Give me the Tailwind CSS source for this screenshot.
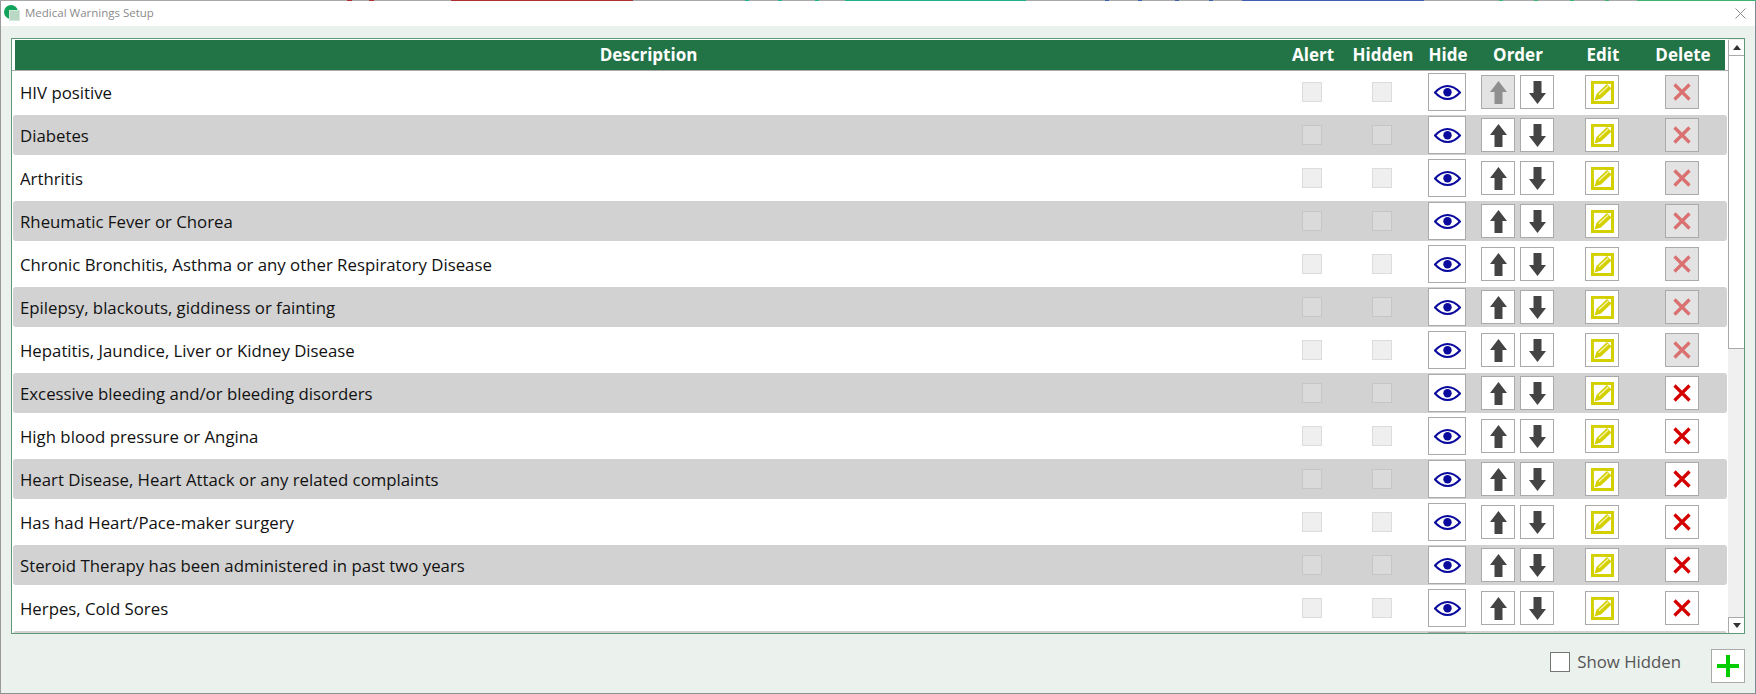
<!DOCTYPE html>
<html>
<head>
<meta charset="utf-8">
<script src="https://cdn.jsdelivr.net/npm/@tailwindcss/browser@4"></script>
<title>Medical Warnings Setup</title>
</head>
<body class="w-[1756px] h-[694px] overflow-hidden bg-white font-['Open_Sans','Noto_Sans',sans-serif]">
<svg width="0" height="0" class="absolute">
  <defs>
    <symbol id="eye" viewBox="0 0 27 15"><path d="M1 7.500C6 2 10 1 13.500 1S21 2 26 7.500C21 13 17 14 13.500 14S6 13 1 7.500Z" fill="none" stroke="#0a0a9e" stroke-width="2"/><circle cx="13.500" cy="7.300" r="4.200" fill="#0a0a9e"/></symbol>
    <symbol id="up" viewBox="0 0 17 23"><path d="M8.500 0 17 11H12.500V23H4.500V11H0Z" fill="currentColor"/></symbol>
    <symbol id="down" viewBox="0 0 17 23"><path d="M4.500 0H12.500V12H17L8.500 23 0 12H4.500Z" fill="currentColor"/></symbol>
    <symbol id="edit" viewBox="0 0 23 23"><path d="M1.500 1.500H21.500V21.500H1.500Z" fill="none" stroke="#d4d000" stroke-width="3"/><path d="M3.500 19.500 5.500 13 16 3 20.500 7.500 10 17.500Z" fill="#d4d000"/><path d="M7.800 13.800 17.300 5" stroke="#f6f5b0" stroke-width="1.300"/><path d="M14 3.200 3.200 3.200 3.200 11" stroke="#fff" stroke-width=".4" fill="none"/></symbol>
    <symbol id="x" viewBox="0 0 18 18"><path d="M1.500 1.500 16.500 16.500M16.500 1.500 1.500 16.500" stroke="#d40000" stroke-width="3.200" fill="none"/></symbol>
  </defs>
</svg>

<div class="relative flex flex-col w-[1756px] h-[694px] border-l border-l-[#9a9a9a] border-r border-r-[#7c8a94] border-b border-b-[#8a8f92]">
  <div class="absolute -left-px -right-px top-0 h-px flex bg-[#a9a9a9]">
    <div class="ml-[347px] w-[5px] bg-[#b03030]"></div><div class="ml-[17px] w-[5px] bg-[#b03030]"></div>
    <div class="ml-[77px] w-[182px] bg-[#b03030]"></div>
    <div class="ml-[112px] w-[4px] bg-[#1fb08e]"></div><div class="ml-[29px] w-[4px] bg-[#1fb08e]"></div><div class="ml-[33px] w-[4px] bg-[#1fb08e]"></div>
    <div class="ml-[26px] w-[181px] bg-[#1fb08e]"></div>
    <div class="ml-[79px] w-[4px] bg-[#3f5fb0]"></div><div class="ml-[29px] w-[4px] bg-[#3f5fb0]"></div><div class="ml-[33px] w-[4px] bg-[#3f5fb0]"></div><div class="ml-[30px] w-[4px] bg-[#3f5fb0]"></div>
    <div class="ml-[29px] w-[182px] bg-[#3f5fb0]"></div>
    <div class="ml-[75px] w-[4px] bg-[#3cb371]"></div><div class="ml-[31px] w-[4px] bg-[#3cb371]"></div><div class="ml-[32px] w-[4px] bg-[#3cb371]"></div><div class="ml-[31px] w-[4px] bg-[#3cb371]"></div>
    <div class="ml-[28px] w-[119px] bg-[#3cb371]"></div>
  </div>

  <header class="flex items-center h-[26px] bg-white pl-[3px] pr-[9px] shrink-0">
    <svg width="17" height="17" viewBox="0 0 17 17" class="shrink-0 mt-px"><circle cx="7" cy="7" r="7" fill="#12a35a"/><rect x="5.500" y="5.500" width="10" height="10" fill="#b9d9c4" stroke="#d4e6da"/></svg>
    <span class="ml-[4px] text-[11.5px] text-[#8b8b8b]">Medical Warnings Setup</span>
    <svg width="11" height="11" viewBox="0 0 11 11" class="ml-auto"><path d="M.5.5 10.500 10.500M10.500.5.500 10.500" stroke="#8a8a8a" fill="none"/></svg>
  </header>

  <main class="flex flex-col flex-1 bg-[#ebf1ed] pt-[12px] pl-[10px] pr-[10px] min-h-0">
    <section class="flex h-[596px] border border-[#5f9a78] bg-white overflow-hidden shrink-0">
      <div class="flex flex-col w-[1716px] pt-px overflow-hidden">
        <div class="flex items-center h-[30px] shrink-0 ml-[3px] mr-[3px] bg-[#227447] text-white font-bold text-[17px]">
          <div class="w-[1267px] text-center">Description</div>
          <div class="w-[62px] text-center">Alert</div>
          <div class="w-[78px] text-center">Hidden</div>
          <div class="w-[52px] text-center">Hide</div>
          <div class="w-[88px] text-center">Order</div>
          <div class="w-[82px] text-center">Edit</div>
          <div class="w-[78px] text-center">Delete</div>
        </div>
        <div class="h-px bg-[#aaaaaa] shrink-0"></div>
        <div class="flex flex-col pt-px text-[16.8px] text-[#111]">

          <div class="flex items-center h-[40px] mb-[3px] shrink-0 rounded-[3px] mx-px pl-[7px]">
            <div class="w-[1282px] pt-px truncate">HIV positive</div>
            <div class="w-[20px] h-[20px] bg-[#efefef] border border-[#dcdcdc]"></div>
            <div class="w-[20px] h-[20px] ml-[50px] bg-[#efefef] border border-[#dcdcdc]"></div>
            <div class="w-[38px] h-[38px] ml-[36px] flex items-center justify-center bg-white border border-[#aaa]"><svg width="27" height="15"><use href="#eye"/></svg></div>
            <div class="w-[34px] h-[34px] ml-[15px] flex items-center justify-center bg-[#e3e3e3] border border-[#aaa] text-[#8f8f8f]"><svg width="17" height="23"><use href="#up"/></svg></div>
            <div class="w-[34px] h-[34px] ml-[5px] flex items-center justify-center bg-white border border-[#aaa] text-[#444]"><svg width="17" height="23"><use href="#down"/></svg></div>
            <div class="w-[34px] h-[34px] ml-[31px] flex items-center justify-center bg-white border border-[#aaa]"><svg width="23" height="23"><use href="#edit"/></svg></div>
            <div class="w-[34px] h-[34px] ml-[46px] flex items-center justify-center bg-[#e3e3e3] border border-[#aaa]"><svg width="18" height="18" class="opacity-50"><use href="#x"/></svg></div>
          </div>

          <div class="flex items-center h-[40px] mb-[3px] shrink-0 rounded-[3px] mx-px pl-[7px] bg-[#d2d2d2]">
            <div class="w-[1282px] pt-px truncate">Diabetes</div>
            <div class="w-[20px] h-[20px] bg-[#dadada] border border-[#c6c6c6]"></div>
            <div class="w-[20px] h-[20px] ml-[50px] bg-[#dadada] border border-[#c6c6c6]"></div>
            <div class="w-[38px] h-[38px] ml-[36px] flex items-center justify-center bg-white border border-[#aaa]"><svg width="27" height="15"><use href="#eye"/></svg></div>
            <div class="w-[34px] h-[34px] ml-[15px] flex items-center justify-center bg-white border border-[#aaa] text-[#444]"><svg width="17" height="23"><use href="#up"/></svg></div>
            <div class="w-[34px] h-[34px] ml-[5px] flex items-center justify-center bg-white border border-[#aaa] text-[#444]"><svg width="17" height="23"><use href="#down"/></svg></div>
            <div class="w-[34px] h-[34px] ml-[31px] flex items-center justify-center bg-white border border-[#aaa]"><svg width="23" height="23"><use href="#edit"/></svg></div>
            <div class="w-[34px] h-[34px] ml-[46px] flex items-center justify-center bg-[#e3e3e3] border border-[#aaa]"><svg width="18" height="18" class="opacity-50"><use href="#x"/></svg></div>
          </div>

          <div class="flex items-center h-[40px] mb-[3px] shrink-0 rounded-[3px] mx-px pl-[7px]">
            <div class="w-[1282px] pt-px truncate">Arthritis</div>
            <div class="w-[20px] h-[20px] bg-[#efefef] border border-[#dcdcdc]"></div>
            <div class="w-[20px] h-[20px] ml-[50px] bg-[#efefef] border border-[#dcdcdc]"></div>
            <div class="w-[38px] h-[38px] ml-[36px] flex items-center justify-center bg-white border border-[#aaa]"><svg width="27" height="15"><use href="#eye"/></svg></div>
            <div class="w-[34px] h-[34px] ml-[15px] flex items-center justify-center bg-white border border-[#aaa] text-[#444]"><svg width="17" height="23"><use href="#up"/></svg></div>
            <div class="w-[34px] h-[34px] ml-[5px] flex items-center justify-center bg-white border border-[#aaa] text-[#444]"><svg width="17" height="23"><use href="#down"/></svg></div>
            <div class="w-[34px] h-[34px] ml-[31px] flex items-center justify-center bg-white border border-[#aaa]"><svg width="23" height="23"><use href="#edit"/></svg></div>
            <div class="w-[34px] h-[34px] ml-[46px] flex items-center justify-center bg-[#e3e3e3] border border-[#aaa]"><svg width="18" height="18" class="opacity-50"><use href="#x"/></svg></div>
          </div>

          <div class="flex items-center h-[40px] mb-[3px] shrink-0 rounded-[3px] mx-px pl-[7px] bg-[#d2d2d2]">
            <div class="w-[1282px] pt-px truncate">Rheumatic Fever or Chorea</div>
            <div class="w-[20px] h-[20px] bg-[#dadada] border border-[#c6c6c6]"></div>
            <div class="w-[20px] h-[20px] ml-[50px] bg-[#dadada] border border-[#c6c6c6]"></div>
            <div class="w-[38px] h-[38px] ml-[36px] flex items-center justify-center bg-white border border-[#aaa]"><svg width="27" height="15"><use href="#eye"/></svg></div>
            <div class="w-[34px] h-[34px] ml-[15px] flex items-center justify-center bg-white border border-[#aaa] text-[#444]"><svg width="17" height="23"><use href="#up"/></svg></div>
            <div class="w-[34px] h-[34px] ml-[5px] flex items-center justify-center bg-white border border-[#aaa] text-[#444]"><svg width="17" height="23"><use href="#down"/></svg></div>
            <div class="w-[34px] h-[34px] ml-[31px] flex items-center justify-center bg-white border border-[#aaa]"><svg width="23" height="23"><use href="#edit"/></svg></div>
            <div class="w-[34px] h-[34px] ml-[46px] flex items-center justify-center bg-[#e3e3e3] border border-[#aaa]"><svg width="18" height="18" class="opacity-50"><use href="#x"/></svg></div>
          </div>

          <div class="flex items-center h-[40px] mb-[3px] shrink-0 rounded-[3px] mx-px pl-[7px]">
            <div class="w-[1282px] pt-px truncate">Chronic Bronchitis, Asthma or any other Respiratory Disease</div>
            <div class="w-[20px] h-[20px] bg-[#efefef] border border-[#dcdcdc]"></div>
            <div class="w-[20px] h-[20px] ml-[50px] bg-[#efefef] border border-[#dcdcdc]"></div>
            <div class="w-[38px] h-[38px] ml-[36px] flex items-center justify-center bg-white border border-[#aaa]"><svg width="27" height="15"><use href="#eye"/></svg></div>
            <div class="w-[34px] h-[34px] ml-[15px] flex items-center justify-center bg-white border border-[#aaa] text-[#444]"><svg width="17" height="23"><use href="#up"/></svg></div>
            <div class="w-[34px] h-[34px] ml-[5px] flex items-center justify-center bg-white border border-[#aaa] text-[#444]"><svg width="17" height="23"><use href="#down"/></svg></div>
            <div class="w-[34px] h-[34px] ml-[31px] flex items-center justify-center bg-white border border-[#aaa]"><svg width="23" height="23"><use href="#edit"/></svg></div>
            <div class="w-[34px] h-[34px] ml-[46px] flex items-center justify-center bg-[#e3e3e3] border border-[#aaa]"><svg width="18" height="18" class="opacity-50"><use href="#x"/></svg></div>
          </div>

          <div class="flex items-center h-[40px] mb-[3px] shrink-0 rounded-[3px] mx-px pl-[7px] bg-[#d2d2d2]">
            <div class="w-[1282px] pt-px truncate">Epilepsy, blackouts, giddiness or fainting</div>
            <div class="w-[20px] h-[20px] bg-[#dadada] border border-[#c6c6c6]"></div>
            <div class="w-[20px] h-[20px] ml-[50px] bg-[#dadada] border border-[#c6c6c6]"></div>
            <div class="w-[38px] h-[38px] ml-[36px] flex items-center justify-center bg-white border border-[#aaa]"><svg width="27" height="15"><use href="#eye"/></svg></div>
            <div class="w-[34px] h-[34px] ml-[15px] flex items-center justify-center bg-white border border-[#aaa] text-[#444]"><svg width="17" height="23"><use href="#up"/></svg></div>
            <div class="w-[34px] h-[34px] ml-[5px] flex items-center justify-center bg-white border border-[#aaa] text-[#444]"><svg width="17" height="23"><use href="#down"/></svg></div>
            <div class="w-[34px] h-[34px] ml-[31px] flex items-center justify-center bg-white border border-[#aaa]"><svg width="23" height="23"><use href="#edit"/></svg></div>
            <div class="w-[34px] h-[34px] ml-[46px] flex items-center justify-center bg-[#e3e3e3] border border-[#aaa]"><svg width="18" height="18" class="opacity-50"><use href="#x"/></svg></div>
          </div>

          <div class="flex items-center h-[40px] mb-[3px] shrink-0 rounded-[3px] mx-px pl-[7px]">
            <div class="w-[1282px] pt-px truncate">Hepatitis, Jaundice, Liver or Kidney Disease</div>
            <div class="w-[20px] h-[20px] bg-[#efefef] border border-[#dcdcdc]"></div>
            <div class="w-[20px] h-[20px] ml-[50px] bg-[#efefef] border border-[#dcdcdc]"></div>
            <div class="w-[38px] h-[38px] ml-[36px] flex items-center justify-center bg-white border border-[#aaa]"><svg width="27" height="15"><use href="#eye"/></svg></div>
            <div class="w-[34px] h-[34px] ml-[15px] flex items-center justify-center bg-white border border-[#aaa] text-[#444]"><svg width="17" height="23"><use href="#up"/></svg></div>
            <div class="w-[34px] h-[34px] ml-[5px] flex items-center justify-center bg-white border border-[#aaa] text-[#444]"><svg width="17" height="23"><use href="#down"/></svg></div>
            <div class="w-[34px] h-[34px] ml-[31px] flex items-center justify-center bg-white border border-[#aaa]"><svg width="23" height="23"><use href="#edit"/></svg></div>
            <div class="w-[34px] h-[34px] ml-[46px] flex items-center justify-center bg-[#e3e3e3] border border-[#aaa]"><svg width="18" height="18" class="opacity-50"><use href="#x"/></svg></div>
          </div>

          <div class="flex items-center h-[40px] mb-[3px] shrink-0 rounded-[3px] mx-px pl-[7px] bg-[#d2d2d2]">
            <div class="w-[1282px] pt-px truncate">Excessive bleeding and/or bleeding disorders</div>
            <div class="w-[20px] h-[20px] bg-[#dadada] border border-[#c6c6c6]"></div>
            <div class="w-[20px] h-[20px] ml-[50px] bg-[#dadada] border border-[#c6c6c6]"></div>
            <div class="w-[38px] h-[38px] ml-[36px] flex items-center justify-center bg-white border border-[#aaa]"><svg width="27" height="15"><use href="#eye"/></svg></div>
            <div class="w-[34px] h-[34px] ml-[15px] flex items-center justify-center bg-white border border-[#aaa] text-[#444]"><svg width="17" height="23"><use href="#up"/></svg></div>
            <div class="w-[34px] h-[34px] ml-[5px] flex items-center justify-center bg-white border border-[#aaa] text-[#444]"><svg width="17" height="23"><use href="#down"/></svg></div>
            <div class="w-[34px] h-[34px] ml-[31px] flex items-center justify-center bg-white border border-[#aaa]"><svg width="23" height="23"><use href="#edit"/></svg></div>
            <div class="w-[34px] h-[34px] ml-[46px] flex items-center justify-center bg-white border border-[#aaa]"><svg width="18" height="18"><use href="#x"/></svg></div>
          </div>

          <div class="flex items-center h-[40px] mb-[3px] shrink-0 rounded-[3px] mx-px pl-[7px]">
            <div class="w-[1282px] pt-px truncate">High blood pressure or Angina</div>
            <div class="w-[20px] h-[20px] bg-[#efefef] border border-[#dcdcdc]"></div>
            <div class="w-[20px] h-[20px] ml-[50px] bg-[#efefef] border border-[#dcdcdc]"></div>
            <div class="w-[38px] h-[38px] ml-[36px] flex items-center justify-center bg-white border border-[#aaa]"><svg width="27" height="15"><use href="#eye"/></svg></div>
            <div class="w-[34px] h-[34px] ml-[15px] flex items-center justify-center bg-white border border-[#aaa] text-[#444]"><svg width="17" height="23"><use href="#up"/></svg></div>
            <div class="w-[34px] h-[34px] ml-[5px] flex items-center justify-center bg-white border border-[#aaa] text-[#444]"><svg width="17" height="23"><use href="#down"/></svg></div>
            <div class="w-[34px] h-[34px] ml-[31px] flex items-center justify-center bg-white border border-[#aaa]"><svg width="23" height="23"><use href="#edit"/></svg></div>
            <div class="w-[34px] h-[34px] ml-[46px] flex items-center justify-center bg-white border border-[#aaa]"><svg width="18" height="18"><use href="#x"/></svg></div>
          </div>

          <div class="flex items-center h-[40px] mb-[3px] shrink-0 rounded-[3px] mx-px pl-[7px] bg-[#d2d2d2]">
            <div class="w-[1282px] pt-px truncate">Heart Disease, Heart Attack or any related complaints</div>
            <div class="w-[20px] h-[20px] bg-[#dadada] border border-[#c6c6c6]"></div>
            <div class="w-[20px] h-[20px] ml-[50px] bg-[#dadada] border border-[#c6c6c6]"></div>
            <div class="w-[38px] h-[38px] ml-[36px] flex items-center justify-center bg-white border border-[#aaa]"><svg width="27" height="15"><use href="#eye"/></svg></div>
            <div class="w-[34px] h-[34px] ml-[15px] flex items-center justify-center bg-white border border-[#aaa] text-[#444]"><svg width="17" height="23"><use href="#up"/></svg></div>
            <div class="w-[34px] h-[34px] ml-[5px] flex items-center justify-center bg-white border border-[#aaa] text-[#444]"><svg width="17" height="23"><use href="#down"/></svg></div>
            <div class="w-[34px] h-[34px] ml-[31px] flex items-center justify-center bg-white border border-[#aaa]"><svg width="23" height="23"><use href="#edit"/></svg></div>
            <div class="w-[34px] h-[34px] ml-[46px] flex items-center justify-center bg-white border border-[#aaa]"><svg width="18" height="18"><use href="#x"/></svg></div>
          </div>

          <div class="flex items-center h-[40px] mb-[3px] shrink-0 rounded-[3px] mx-px pl-[7px]">
            <div class="w-[1282px] pt-px truncate">Has had Heart/Pace-maker surgery</div>
            <div class="w-[20px] h-[20px] bg-[#efefef] border border-[#dcdcdc]"></div>
            <div class="w-[20px] h-[20px] ml-[50px] bg-[#efefef] border border-[#dcdcdc]"></div>
            <div class="w-[38px] h-[38px] ml-[36px] flex items-center justify-center bg-white border border-[#aaa]"><svg width="27" height="15"><use href="#eye"/></svg></div>
            <div class="w-[34px] h-[34px] ml-[15px] flex items-center justify-center bg-white border border-[#aaa] text-[#444]"><svg width="17" height="23"><use href="#up"/></svg></div>
            <div class="w-[34px] h-[34px] ml-[5px] flex items-center justify-center bg-white border border-[#aaa] text-[#444]"><svg width="17" height="23"><use href="#down"/></svg></div>
            <div class="w-[34px] h-[34px] ml-[31px] flex items-center justify-center bg-white border border-[#aaa]"><svg width="23" height="23"><use href="#edit"/></svg></div>
            <div class="w-[34px] h-[34px] ml-[46px] flex items-center justify-center bg-white border border-[#aaa]"><svg width="18" height="18"><use href="#x"/></svg></div>
          </div>

          <div class="flex items-center h-[40px] mb-[3px] shrink-0 rounded-[3px] mx-px pl-[7px] bg-[#d2d2d2]">
            <div class="w-[1282px] pt-px truncate">Steroid Therapy has been administered in past two years</div>
            <div class="w-[20px] h-[20px] bg-[#dadada] border border-[#c6c6c6]"></div>
            <div class="w-[20px] h-[20px] ml-[50px] bg-[#dadada] border border-[#c6c6c6]"></div>
            <div class="w-[38px] h-[38px] ml-[36px] flex items-center justify-center bg-white border border-[#aaa]"><svg width="27" height="15"><use href="#eye"/></svg></div>
            <div class="w-[34px] h-[34px] ml-[15px] flex items-center justify-center bg-white border border-[#aaa] text-[#444]"><svg width="17" height="23"><use href="#up"/></svg></div>
            <div class="w-[34px] h-[34px] ml-[5px] flex items-center justify-center bg-white border border-[#aaa] text-[#444]"><svg width="17" height="23"><use href="#down"/></svg></div>
            <div class="w-[34px] h-[34px] ml-[31px] flex items-center justify-center bg-white border border-[#aaa]"><svg width="23" height="23"><use href="#edit"/></svg></div>
            <div class="w-[34px] h-[34px] ml-[46px] flex items-center justify-center bg-white border border-[#aaa]"><svg width="18" height="18"><use href="#x"/></svg></div>
          </div>

          <div class="flex items-center h-[40px] mb-[3px] shrink-0 rounded-[3px] mx-px pl-[7px]">
            <div class="w-[1282px] pt-px truncate">Herpes, Cold Sores</div>
            <div class="w-[20px] h-[20px] bg-[#efefef] border border-[#dcdcdc]"></div>
            <div class="w-[20px] h-[20px] ml-[50px] bg-[#efefef] border border-[#dcdcdc]"></div>
            <div class="w-[38px] h-[38px] ml-[36px] flex items-center justify-center bg-white border border-[#aaa]"><svg width="27" height="15"><use href="#eye"/></svg></div>
            <div class="w-[34px] h-[34px] ml-[15px] flex items-center justify-center bg-white border border-[#aaa] text-[#444]"><svg width="17" height="23"><use href="#up"/></svg></div>
            <div class="w-[34px] h-[34px] ml-[5px] flex items-center justify-center bg-white border border-[#aaa] text-[#444]"><svg width="17" height="23"><use href="#down"/></svg></div>
            <div class="w-[34px] h-[34px] ml-[31px] flex items-center justify-center bg-white border border-[#aaa]"><svg width="23" height="23"><use href="#edit"/></svg></div>
            <div class="w-[34px] h-[34px] ml-[46px] flex items-center justify-center bg-white border border-[#aaa]"><svg width="18" height="18"><use href="#x"/></svg></div>
          </div>

          <div class="flex items-start h-[40px] shrink-0 rounded-[3px] mx-px pl-[6px] bg-[#d2d2d2]">
            <div class="w-[38px] h-[38px] ml-[1409px] mt-px bg-white border border-[#aaa]"></div>
          </div>
        </div>
      </div>

      <div class="flex flex-col w-[16px] bg-[#f0f0f0]">
        <div class="flex items-center justify-center h-[16px] shrink-0 mt-px bg-white border-l border-b border-[#aaa]">
          <svg width="8" height="5" viewBox="0 0 8 5"><path d="M4 0 8 5H0Z" fill="#333"/></svg>
        </div>
        <div class="h-[293px] shrink-0 bg-white border-l border-b border-[#aaa]"></div>
        <div class="flex items-center justify-center h-[16px] mt-auto bg-white border-l border-t border-[#aaa]">
          <svg width="8" height="5" viewBox="0 0 8 5"><path d="M0 0H8L4 5Z" fill="#333"/></svg>
        </div>
      </div>
    </section>

    <footer class="flex items-start justify-end pt-[15px]">
      <div class="w-[20px] h-[20px] mt-[3px] bg-white border border-[#767676]"></div>
      <span class="ml-[7px] mt-[1px] text-[16.8px] leading-[24px] text-[#555]">Show Hidden</span>
      <div class="w-[34px] h-[34px] ml-[30px] flex items-center justify-center bg-white border border-[#aaa]">
        <svg width="24" height="24" viewBox="0 0 24 24"><path d="M12 1V23M1 12H23" stroke="#00cc00" stroke-width="4" fill="none"/></svg>
      </div>
    </footer>
  </main>
</div>
</body>
</html>
